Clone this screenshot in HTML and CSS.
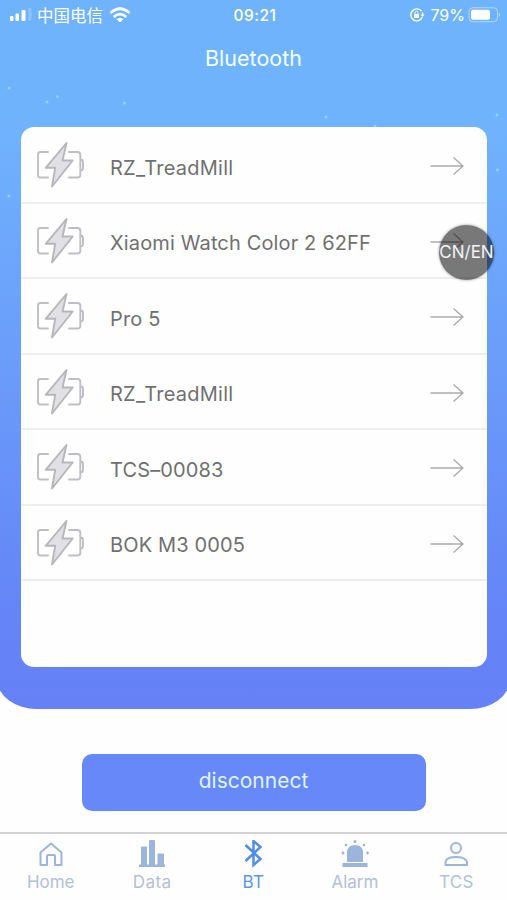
FILE: index.html
```html
<!DOCTYPE html>
<html lang="en">
<head>
<meta charset="utf-8">
<title>Bluetooth</title>
<link rel="stylesheet" href="styles.css">
</head>
<body>
<svg class="defs" width="0" height="0">
  <symbol id="battery" viewBox="0 0 48 48">
    <g fill="none" stroke="#bfbfc3" stroke-width="1.9" stroke-linecap="round" stroke-linejoin="round">
      <path d="M12 11H4.500Q2 11 2 13.500V34Q2 36.500 4.500 36.500H12M33 11H41.500Q44.300 11 44.300 13.800V33.700Q44.300 36.500 41.500 36.500H33M44.500 18.500Q47 18.500 47 21V27Q47 29.500 44.500 29.500"/>
      <path fill="#e1e1e5" stroke="#b7b7bb" d="M30.500 2L9.700 26.800H19.200L16 45.500L36.700 19.500H26.500Z"/>
    </g>
  </symbol>
  <symbol id="arrow" viewBox="0 0 34 20">
    <path d="M.5 10H33M23.500 1.500L33 10L23.500 18.500" fill="none" stroke="#aaa" stroke-width="1.300"/>
  </symbol>
</svg>
<main class="screen">
  <section class="hero">
    <svg class="stars" width="507" height="220" fill="#9bd8ff">
      <circle cx="9" cy="88" r="1.500"/><circle cx="47" cy="102" r="1.500"/><circle cx="57.500" cy="96.500" r="1.500"/><circle cx="124.500" cy="103" r="1.500"/><circle cx="326" cy="117" r="1.500"/><circle cx="375" cy="126" r="1.500"/><circle cx="497" cy="115" r="1.500"/><circle cx="9" cy="196" r="1.500"/><circle cx="497.500" cy="170" r="1.500"/>
    </svg>
    <header class="status">
      <div class="carrier">
        <svg width="24" height="14" viewBox="0 0 24 14" fill="#fff"><rect x="1" y="8" width="3.500" height="5" rx="1"/><rect x="6.500" y="5.500" width="3.500" height="7.500" rx="1"/><rect x="12.500" y="2" width="4" height="11" rx="1"/><rect x="19" y="0" width="3.500" height="13" rx="1" opacity=".2"/></svg>
        <span class="operator">中国电信</span>
        <svg width="22" height="16" viewBox="0 0 22 16"><g fill="none" stroke="#fff" stroke-width="2.700"><path d="M1.500 6Q11-2.500 20.500 6M4.800 10Q11 4.300 17.200 10"/></g><path fill="#fff" d="M7.600 12.300Q11 9.300 14.400 12.300L11 15.300Z"/></svg>
      </div>
      <time>09:21</time>
      <div class="power">
        <svg width="16" height="16" viewBox="0 0 16 16"><path d="M12.600 4.200A6 6 0 1 0 13.300 10.300M13.600 5.500V8.500" fill="none" stroke="#fff" stroke-width="1.400"/><path d="M11.500 7.500H15.500L13.500 10Z" fill="#fff"/><rect x="5" y="7" width="5" height="4" rx=".5" fill="#fff"/><path d="M6 7V5.700A1.500 1.500 0 0 1 9 5.700V7" fill="none" stroke="#fff"/></svg>
        <span class="percent">79%</span>
        <svg width="33" height="16" viewBox="0 0 33 16"><rect x="1" y=".7" width="28.500" height="14" rx="4" fill="none" stroke="#fff" stroke-opacity=".45"/><rect x="3" y="2.700" width="19" height="10" rx="2" fill="#fff"/><path d="M31 5.500Q33 7.700 31 10" fill="#fff" opacity=".5"/></svg>
      </div>
    </header>
    <h1>Bluetooth</h1>
    <ul class="devices">
      <li><svg class="bat"><use href="#battery"/></svg><span class="treadmill">RZ_TreadMill</span><svg class="arrow"><use href="#arrow"/></svg></li>
      <li><svg class="bat"><use href="#battery"/></svg><span>Xiaomi Watch Color 2 62FF</span><svg class="arrow"><use href="#arrow"/></svg></li>
      <li><svg class="bat"><use href="#battery"/></svg><span>Pro 5</span><svg class="arrow"><use href="#arrow"/></svg></li>
      <li><svg class="bat"><use href="#battery"/></svg><span class="treadmill">RZ_TreadMill</span><svg class="arrow"><use href="#arrow"/></svg></li>
      <li><svg class="bat"><use href="#battery"/></svg><span>TCS–00083</span><svg class="arrow"><use href="#arrow"/></svg></li>
      <li><svg class="bat"><use href="#battery"/></svg><span>BOK M3 0005</span><svg class="arrow"><use href="#arrow"/></svg></li>
    </ul>
    <button class="language">CN/EN</button>
  </section>
  <button class="disconnect">disconnect</button>
  <nav>
    <a><svg width="30" height="30" viewBox="0 0 30 30" fill="none" stroke="#9bb5dc" stroke-width="2"><path stroke-linejoin="round" d="M4.500 12.500L15 3.500L25.500 12.500V25H19V16Q19 15 18 15H12Q11 15 11 16V25H4.500Z"/></svg><span>Home</span></a>
    <a><svg width="30" height="30" viewBox="0 0 30 30" fill="#9bb5dc"><path d="M2 24.500H28V27H2ZM4 7.500Q4 6.500 5 6.500H9Q10 6.500 10 7.500V25H4ZM12 1Q12 0 13 0H17Q18 0 18 1V25H12ZM20.500 14.500Q20.500 13.500 21.500 13.500H26Q27 13.500 27 14.500V25H20.500Z"/></svg><span class="data">Data</span></a>
    <a class="active"><svg width="30" height="30" viewBox="0 0 30 30" fill="none" stroke="#528de9" stroke-width="2.500"><path d="M7.500 5L22.500 19L15.500 25V1L22.500 7L7.500 21"/></svg><span class="bt">BT</span></a>
    <a><svg width="30" height="30" viewBox="0 0 30 30" fill="#9bb5dc"><path d="M2.500 23H27.500V27H2.500ZM7 22V13Q7 5 15 5T23 13V22Z"/><g><circle cx="3" cy="13" r="1.400"/><circle cx="6" cy="5" r="1.300"/><circle cx="15" cy="1.500" r="1.500"/><circle cx="24" cy="5" r="1.300"/><circle cx="27.500" cy="13" r="1.400"/></g></svg><span>Alarm</span></a>
    <a><svg width="30" height="30" viewBox="0 0 30 30" fill="none" stroke="#9bb5dc" stroke-width="2"><circle cx="15" cy="8" r="5"/><path stroke-linejoin="round" d="M4.500 25V22Q5.500 17 15 17T26 22V25Z"/></svg><span class="tcs">TCS</span></a>
  </nav>
</main>
</body>
</html>
```

FILE: styles.css
```css
* { box-sizing: border-box; }
body { margin: 0; background: #fefefe; font-family: Inter, "Noto Sans CJK SC", sans-serif; font-weight: 300; }
.defs { position: absolute; }
.screen { width: 507px; height: 900px; display: flex; flex-direction: column; align-items: center; overflow: hidden; }
.hero { position: relative; width: 507px; height: 709px; flex: none; }
.hero::before { content: ""; position: absolute; inset: 0 -3px; background: linear-gradient(#70b3fd 0, #70b3fd 120px, #6484f7 620px, #6681f5 100%); border-radius: 0 0 40px 40px / 0 0 30px 30px; }
.stars { position: absolute; top: 0; left: 0; opacity: .8; }
.status { position: relative; display: grid; grid-template-columns: 1fr auto 1fr; align-items: center; height: 30px; padding: 0 6px 0 9px; color: #fff; font-size: 16px; }
.carrier, .power { display: flex; align-items: center; }
.operator { margin: 0 6px 0 4px; font-family: "Noto Sans CJK SC", sans-serif; font-size: 16.5px; line-height: 20px; font-weight: 400; }
time { font-weight: 500; font-size: 15.5px; letter-spacing: .5px; }
.power { justify-content: flex-end; }
.percent { margin: 0 3px 0 5px; font-weight: 400; font-size: 16px; }
h1 { position: relative; margin: 14px 0 0; height: 28px; line-height: 28px; font-size: 21.5px; font-weight: 400; color: #f0ffff; text-align: center; }
.devices { position: relative; list-style: none; margin: 55px 20px 0 21px; padding: 1px 0 0; height: 540px; background: #fefefe; border-radius: 13px; }
.devices li { height: 75.5px; display: flex; align-items: center; padding: 3px 23px 0 15px; border-bottom: 2px solid #eee; color: #707070; }
.bat { width: 48px; height: 48px; flex: none; margin: -2px 26px 0 0; }
.devices span { flex: 1; font-size: 20px; line-height: 26px; padding-top: 3px; white-space: nowrap; font-weight: 400; letter-spacing: .14px; }
.devices .treadmill { letter-spacing: .25px; }
.arrow { width: 34px; height: 20px; flex: none; }
.language { position: absolute; left: 439px; top: 225px; width: 55px; height: 55px; padding: 0; border: 0; border-radius: 50%; background: rgba(0,0,0,.53); color: #f4f4f4; box-shadow: 0 0 3px rgba(0,0,0,.4); font: 400 17px/55px Inter, sans-serif; white-space: nowrap; }
.disconnect { flex: none; margin-top: 45px; width: 344px; height: 57px; border: 0; border-radius: 10px; background: #6788f9; color: #def4ff; font: 400 21px/26px Inter, sans-serif; padding: 0 0 4px; }
nav { flex: none; width: 507px; height: 68px; margin-top: 21px; padding-top: 6px; border-top: 2px solid #d4d4d4; display: grid; grid-template-columns: repeat(5, 1fr); }
nav a { display: flex; flex-direction: column; align-items: center; color: #b3c0dc; font-size: 17px; font-weight: 400; line-height: 22px; }
nav svg { flex: none; }
nav span { margin-top: 1px; }
.data { letter-spacing: .4px; }
.bt { letter-spacing: .5px; }
.tcs { letter-spacing: .3px; }
nav .active { color: #5b96ee; }
```
